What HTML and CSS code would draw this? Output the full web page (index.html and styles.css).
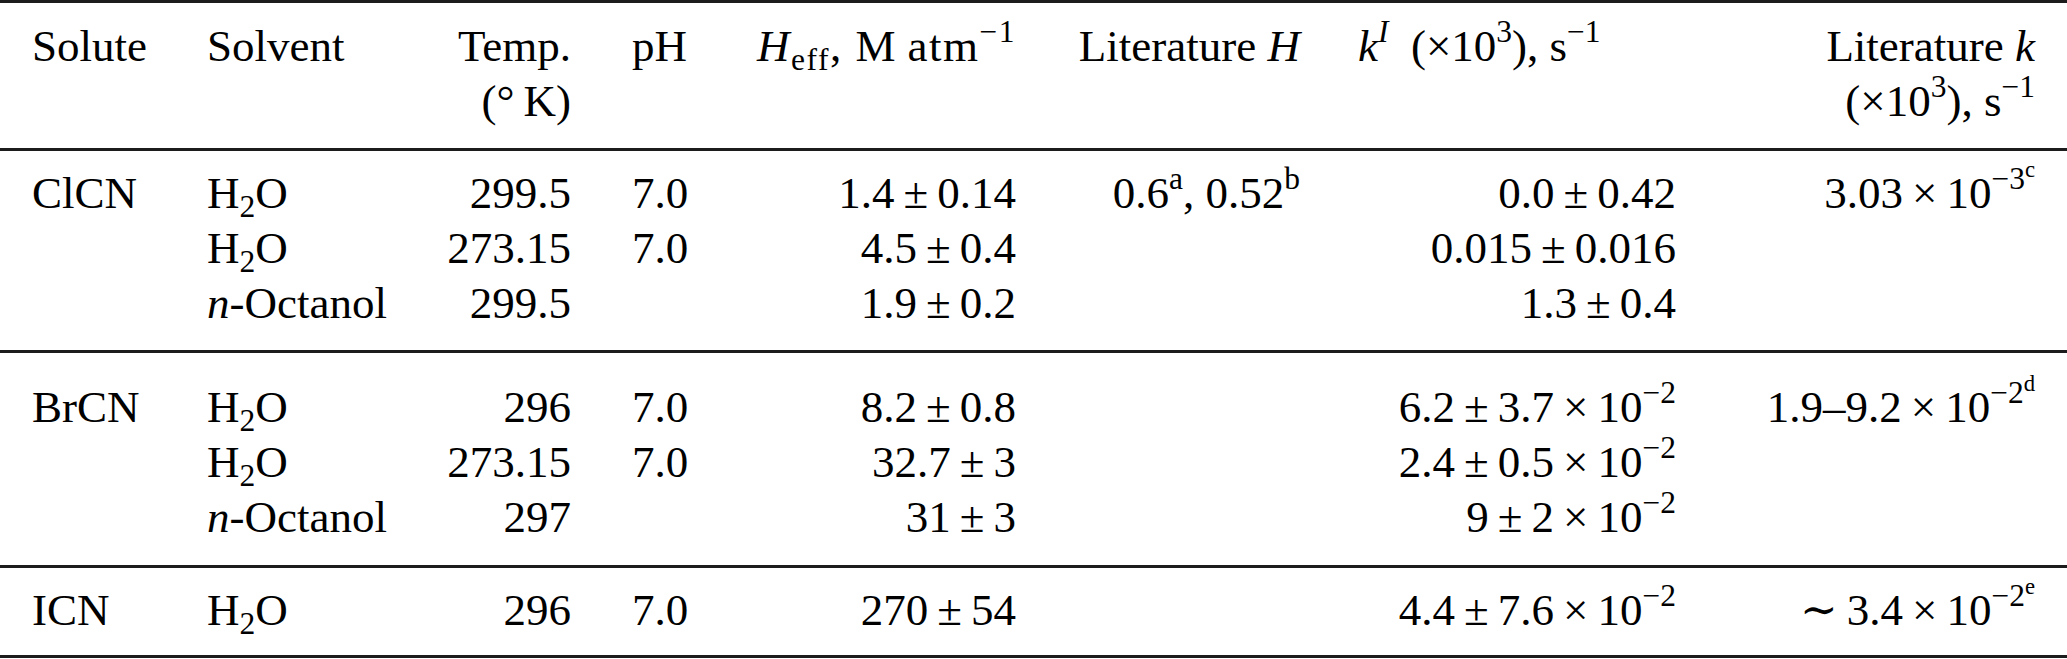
FILE: index.html
```html
<!DOCTYPE html>
<html lang="en">
<head>
    <meta charset="UTF-8">
    <meta name="viewport" content="width=device-width, initial-scale=1.0">
    <title>Cyanogen Halide Solubility and Hydrolysis</title>
    <link rel="stylesheet" href="styles.css">
</head>
<body>
    <table class="data-table">
        <colgroup>
            <col class="c-solute">
            <col class="c-solvent">
            <col class="c-temp">
            <col class="c-ph">
            <col class="c-heff">
            <col class="c-lit-h">
            <col class="c-k">
            <col class="c-lit-k">
        </colgroup>
        <thead>
            <tr>
                <th class="left">Solute</th>
                <th class="left">Solvent</th>
                <th>Temp.<br>(°&#8201;K)</th>
                <th class="left ph">pH</th>
                <th class="heff"><i>H</i><sub>eff</sub>, M&#8201;atm<sup>−1</sup></th>
                <th>Literature <i>H</i></th>
                <th class="left k-head"><i>k<sup>I</sup></i>&ensp;(×10<sup>3</sup>), s<sup>−1</sup></th>
                <th>Literature <i>k</i><br>(×10<sup>3</sup>), s<sup>−1</sup></th>
            </tr>
        </thead>
        <tbody class="group clcn">
            <tr>
                <td class="left">ClCN</td>
                <td class="left">H<sub>2</sub>O</td>
                <td>299.5</td>
                <td class="left ph">7.0</td>
                <td>1.4&#8201;±&#8201;0.14</td>
                <td>0.6<sup>a</sup>, 0.52<sup>b</sup></td>
                <td>0.0&#8201;±&#8201;0.42</td>
                <td>3.03&#8201;×&#8201;10<sup>−3<sup>c</sup></sup></td>
            </tr>
            <tr>
                <td class="left"></td>
                <td class="left">H<sub>2</sub>O</td>
                <td>273.15</td>
                <td class="left ph">7.0</td>
                <td>4.5&#8201;±&#8201;0.4</td>
                <td></td>
                <td>0.015&#8201;±&#8201;0.016</td>
                <td></td>
            </tr>
            <tr>
                <td class="left"></td>
                <td class="left"><i>n</i>-Octanol</td>
                <td>299.5</td>
                <td class="left ph"></td>
                <td>1.9&#8201;±&#8201;0.2</td>
                <td></td>
                <td>1.3&#8201;±&#8201;0.4</td>
                <td></td>
            </tr>
        </tbody>
        <tbody class="group brcn">
            <tr>
                <td class="left">BrCN</td>
                <td class="left">H<sub>2</sub>O</td>
                <td>296</td>
                <td class="left ph">7.0</td>
                <td>8.2&#8201;±&#8201;0.8</td>
                <td></td>
                <td>6.2&#8201;±&#8201;3.7&#8201;×&#8201;10<sup>−2</sup></td>
                <td>1.9–9.2&#8201;×&#8201;10<sup>−2<sup>d</sup></sup></td>
            </tr>
            <tr>
                <td class="left"></td>
                <td class="left">H<sub>2</sub>O</td>
                <td>273.15</td>
                <td class="left ph">7.0</td>
                <td>32.7&#8201;±&#8201;3</td>
                <td></td>
                <td>2.4&#8201;±&#8201;0.5&#8201;×&#8201;10<sup>−2</sup></td>
                <td></td>
            </tr>
            <tr>
                <td class="left"></td>
                <td class="left"><i>n</i>-Octanol</td>
                <td>297</td>
                <td class="left ph"></td>
                <td>31&#8201;±&#8201;3</td>
                <td></td>
                <td>9&#8201;±&#8201;2&#8201;×&#8201;10<sup>−2</sup></td>
                <td></td>
            </tr>
        </tbody>
        <tbody class="group icn">
            <tr>
                <td class="left">ICN</td>
                <td class="left">H<sub>2</sub>O</td>
                <td>296</td>
                <td class="left ph">7.0</td>
                <td>270&#8201;±&#8201;54</td>
                <td></td>
                <td>4.4&#8201;±&#8201;7.6&#8201;×&#8201;10<sup>−2</sup></td>
                <td>∼&#8201;3.4&#8201;×&#8201;10<sup>−2<sup>e</sup></sup></td>
            </tr>
        </tbody>
    </table>
</body>
</html>
```

FILE: styles.css
```css
body {
    margin: 0;
    background-color: #fff;
    color: #000;
    font-family: "Liberation Serif", "DejaVu Serif", serif;
}
.data-table {
    width: 2067px;
    table-layout: fixed;
    border-collapse: separate;
    border-spacing: 0;
    font-size: 45px;
    line-height: 55px;
}
.c-solute { width: 207px; }
.c-solvent { width: 193px; }
.c-temp { width: 171px; }
.c-ph { width: 149px; }
.c-heff { width: 296px; }
.c-lit-h { width: 284px; }
.c-k { width: 376px; }
.c-lit-k { width: 391px; }
th, td {
    padding: 0;
    text-align: right;
    white-space: nowrap;
    vertical-align: top;
    font-weight: normal;
}
th:first-child, td:first-child {
    padding-left: 32px;
}
th:last-child, td:last-child {
    padding-right: 32px;
}
.left {
    text-align: left;
}
.ph {
    padding-left: 61px;
}
.heff {
    letter-spacing: 1.5px;
}
.k-head {
    padding-left: 58px;
}
thead th {
    padding-top: 16px;
    padding-bottom: 19px;
    border-top: 3px solid #1c1c1c;
    border-bottom: 3px solid #1c1c1c;
}
.group tr:last-child td {
    border-bottom: 3px solid #1c1c1c;
}
.clcn tr:first-child td { padding-top: 15px; }
.clcn tr:last-child td { padding-bottom: 19px; }
.brcn tr:first-child td { padding-top: 27px; }
.brcn tr:last-child td { padding-bottom: 20px; }
.icn tr:first-child td { padding-top: 15px; padding-bottom: 17px; }
i {
    font-style: italic;
}
sup {
    font-size: 0.7em;
    line-height: 0;
    vertical-align: 0.6em;
}
sup sup {
    font-size: 0.72em;
    vertical-align: 0.55em;
}
sub {
    font-size: 0.7em;
    line-height: 0;
    vertical-align: -0.3em;
}
```
